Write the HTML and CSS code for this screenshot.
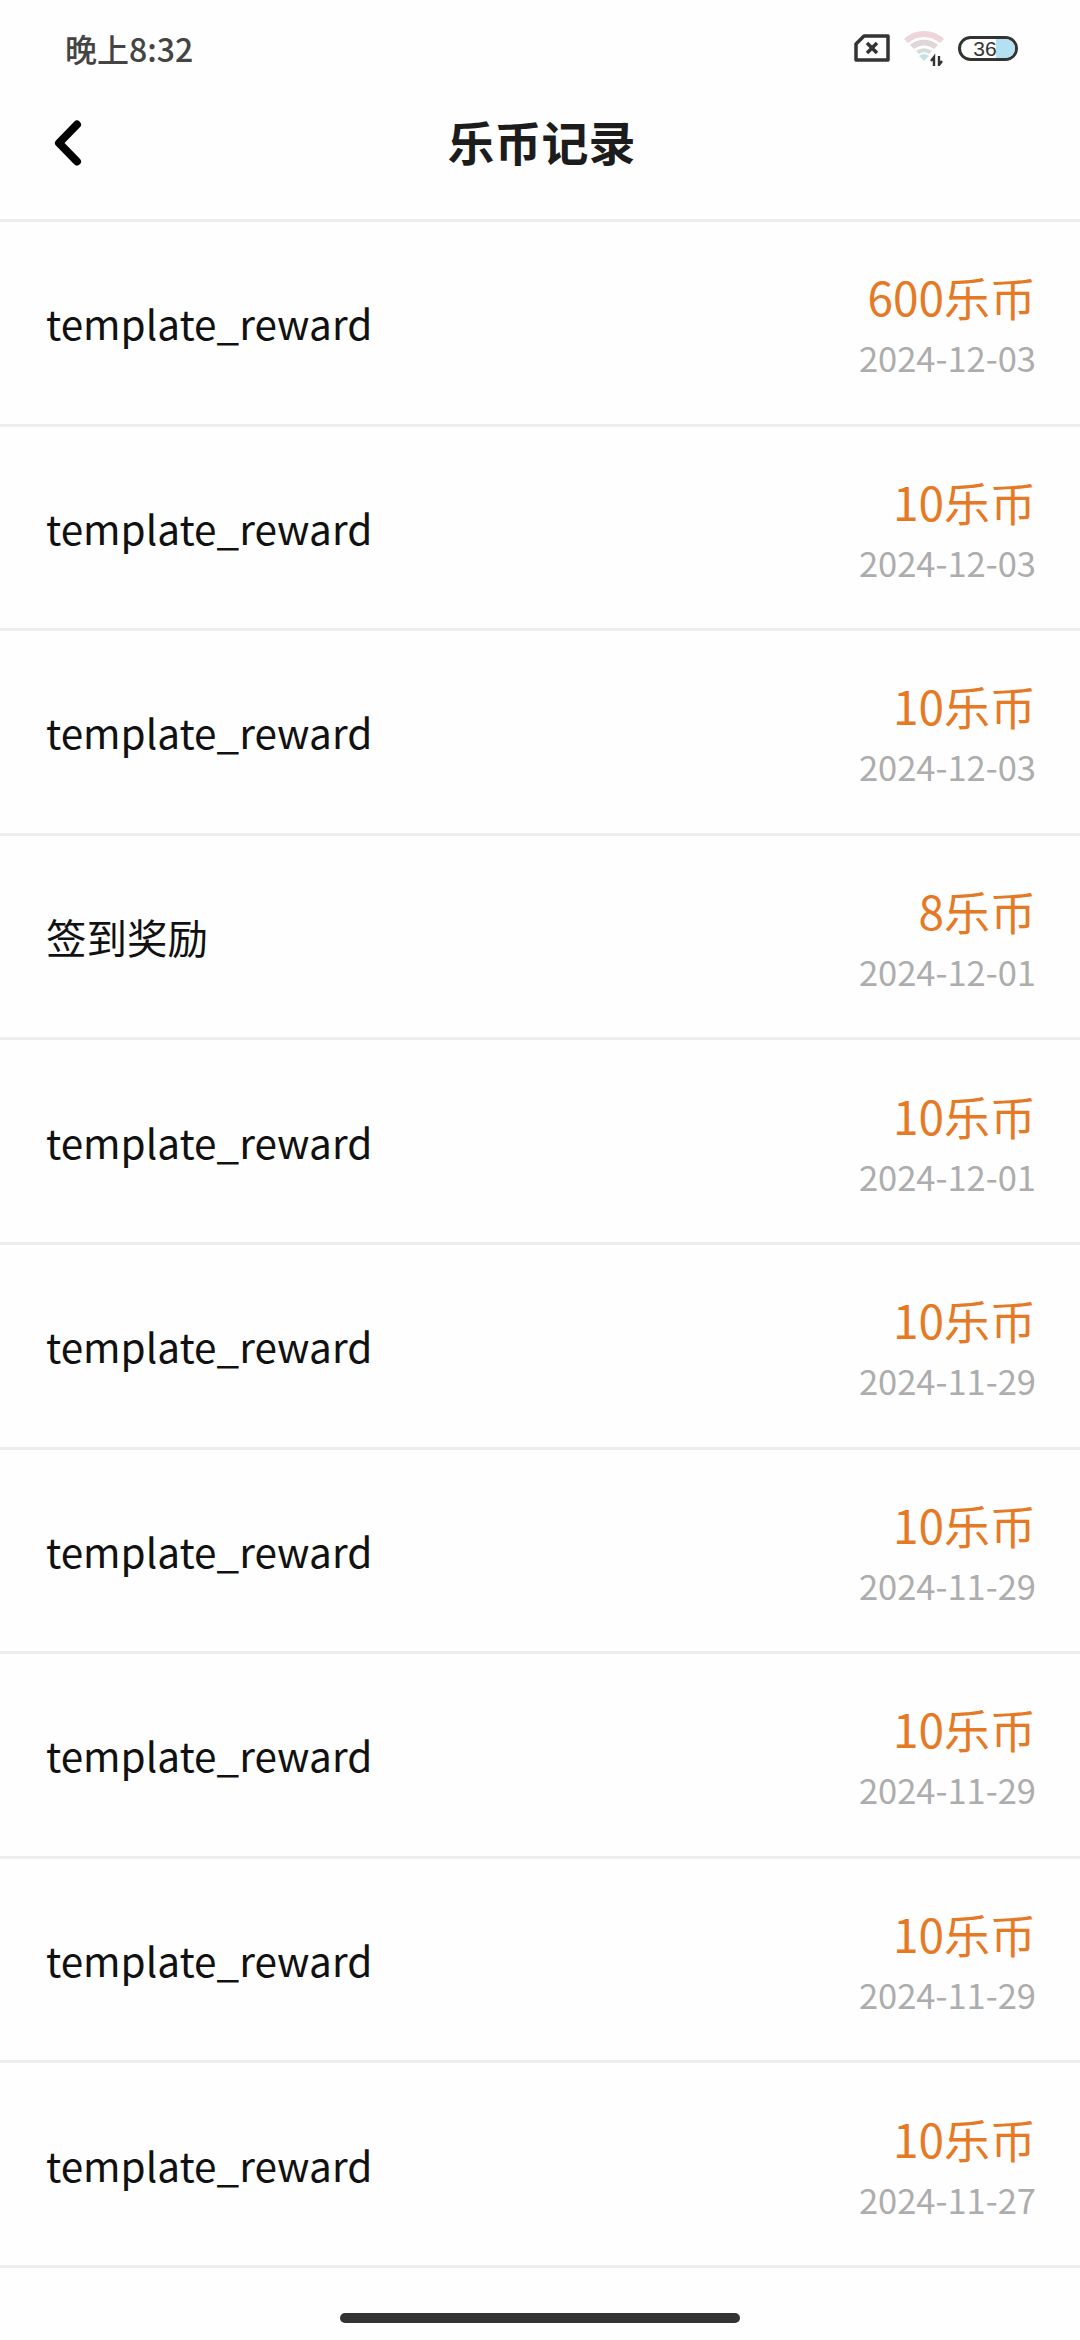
FILE: index.html
```html
<!DOCTYPE html>
<html lang="zh-CN">
<head>
    <meta charset="UTF-8">
    <meta name="viewport" content="width=device-width, initial-scale=1.0">
    <title>乐币记录</title>
    <link rel="stylesheet" href="styles.css">
</head>
<body>
    <div class="page">
        <div class="status-bar">
            <span class="clock">晚上8:32</span>
            <div class="status-icons">
                <svg class="icon-sim" width="36" height="28" viewBox="0 0 36 28">
                    <path d="M10 2 H34 V26 H2 V10 Z" fill="none" stroke="#333" stroke-width="3.5" stroke-linejoin="round"/>
                    <path d="M13 9 L23 19 M23 9 L13 19" stroke="#333" stroke-width="3.5"/>
                </svg>
                <svg class="icon-wifi" width="44" height="36" viewBox="0 0 44 36">
                    <path d="M2 9 A29 29 0 0 1 42 9 L38 13 A24 24 0 0 0 6 13 Z" fill="#edd5da"/>
                    <path d="M8 15 A21 21 0 0 1 36 15 L32 19 A16 16 0 0 0 12 19 Z" fill="#e0d6d8"/>
                    <path d="M14 21 A13 13 0 0 1 30 21 L27 24 A9 9 0 0 0 17 24 Z" fill="#d5dcdc"/>
                    <path d="M17 26 A7 7 0 0 1 27 26 L22 31 Z" fill="#c4e2e4"/>
                    <path d="M32 36 V27 L29 31 M37 26 V35 L40 31" fill="none" stroke="#333" stroke-width="2.4"/>
                </svg>
                <div class="battery">
                    <div class="battery-fill"></div>
                    <span class="battery-level">36</span>
                </div>
            </div>
        </div>

        <div class="nav-bar">
            <svg class="back" width="28" height="46" viewBox="0 0 28 46">
                <path d="M23 4.5 L5 23 L23 41.5" fill="none" stroke="#000" stroke-width="8" stroke-linecap="round" stroke-linejoin="round"/>
            </svg>
            <h1 class="nav-title">乐币记录</h1>
        </div>

        <div class="record-list">
            <div class="record">
                <div class="record-name">template_reward</div>
                <div class="record-side">
                    <div class="record-coins">600乐币</div>
                    <div class="record-date">2024-12-03</div>
                </div>
            </div>
            <div class="record">
                <div class="record-name">template_reward</div>
                <div class="record-side">
                    <div class="record-coins">10乐币</div>
                    <div class="record-date">2024-12-03</div>
                </div>
            </div>
            <div class="record">
                <div class="record-name">template_reward</div>
                <div class="record-side">
                    <div class="record-coins">10乐币</div>
                    <div class="record-date">2024-12-03</div>
                </div>
            </div>
            <div class="record">
                <div class="record-name">签到奖励</div>
                <div class="record-side">
                    <div class="record-coins">8乐币</div>
                    <div class="record-date">2024-12-01</div>
                </div>
            </div>
            <div class="record">
                <div class="record-name">template_reward</div>
                <div class="record-side">
                    <div class="record-coins">10乐币</div>
                    <div class="record-date">2024-12-01</div>
                </div>
            </div>
            <div class="record">
                <div class="record-name">template_reward</div>
                <div class="record-side">
                    <div class="record-coins">10乐币</div>
                    <div class="record-date">2024-11-29</div>
                </div>
            </div>
            <div class="record">
                <div class="record-name">template_reward</div>
                <div class="record-side">
                    <div class="record-coins">10乐币</div>
                    <div class="record-date">2024-11-29</div>
                </div>
            </div>
            <div class="record">
                <div class="record-name">template_reward</div>
                <div class="record-side">
                    <div class="record-coins">10乐币</div>
                    <div class="record-date">2024-11-29</div>
                </div>
            </div>
            <div class="record">
                <div class="record-name">template_reward</div>
                <div class="record-side">
                    <div class="record-coins">10乐币</div>
                    <div class="record-date">2024-11-29</div>
                </div>
            </div>
            <div class="record">
                <div class="record-name">template_reward</div>
                <div class="record-side">
                    <div class="record-coins">10乐币</div>
                    <div class="record-date">2024-11-27</div>
                </div>
            </div>
        </div>

        <div class="home-area">
            <div class="home-bar"></div>
        </div>
    </div>
</body>
</html>
```

FILE: styles.css
```css
body {
    margin: 0;
    background: #fefefe;
    font-family: "Noto Sans CJK SC", "Noto Sans", sans-serif;
}
.page {
    width: 1080px;
    height: 2340px;
    overflow: hidden;
}
.status-bar {
    height: 70px;
    padding: 26px 62px 0 65px;
    display: flex;
    align-items: center;
    justify-content: space-between;
    box-sizing: border-box;
}
.clock {
    font-size: 32px;
    font-weight: 500;
    color: #444;
    line-height: 44px;
}
.status-icons {
    display: flex;
    align-items: center;
    gap: 12px;
}
.battery {
    position: relative;
    width: 60px;
    height: 25px;
    box-sizing: border-box;
    border: 3px solid #333;
    border-radius: 13px;
    overflow: hidden;
}
.battery-fill {
    position: absolute;
    top: 0;
    right: 0;
    bottom: 0;
    width: 19px;
    background: #b5e0f2;
}
.battery-level {
    position: relative;
    display: block;
    text-align: center;
    font-family: "Liberation Sans", sans-serif;
    font-size: 21px;
    line-height: 19px;
    color: #333;
    margin-right: 6px;
}
.nav-bar {
    position: relative;
    height: 152px;
    border-bottom: 3px solid #ededed;
    box-sizing: border-box;
    display: flex;
    align-items: center;
    justify-content: center;
}
.back {
    position: absolute;
    left: 54px;
    top: 50px;
}
.nav-title {
    margin: 0;
    padding: 0 0 8px 3px;
    font-size: 47px;
    font-weight: 700;
    color: #1c1c1c;
    line-height: 62px;
}
.record {
    height: 204.6px;
    box-sizing: border-box;
    border-bottom: 3px solid #ededed;
    padding: 0 44px 0 46px;
    display: flex;
    align-items: center;
    justify-content: space-between;
}
.record-name {
    font-size: 40.5px;
    color: #111;
}
.record-side {
    padding-top: 2px;
    text-align: right;
}
.record-coins {
    font-size: 46px;
    line-height: 60px;
    color: #e67a24;
}
.record-date {
    margin-top: 7px;
    font-size: 34.5px;
    line-height: 48px;
    color: #adadad;
}
.home-area {
    padding-top: 45px;
    display: flex;
    justify-content: center;
}
.home-bar {
    width: 400px;
    height: 10px;
    background: #333;
    border-radius: 5px;
}
```
